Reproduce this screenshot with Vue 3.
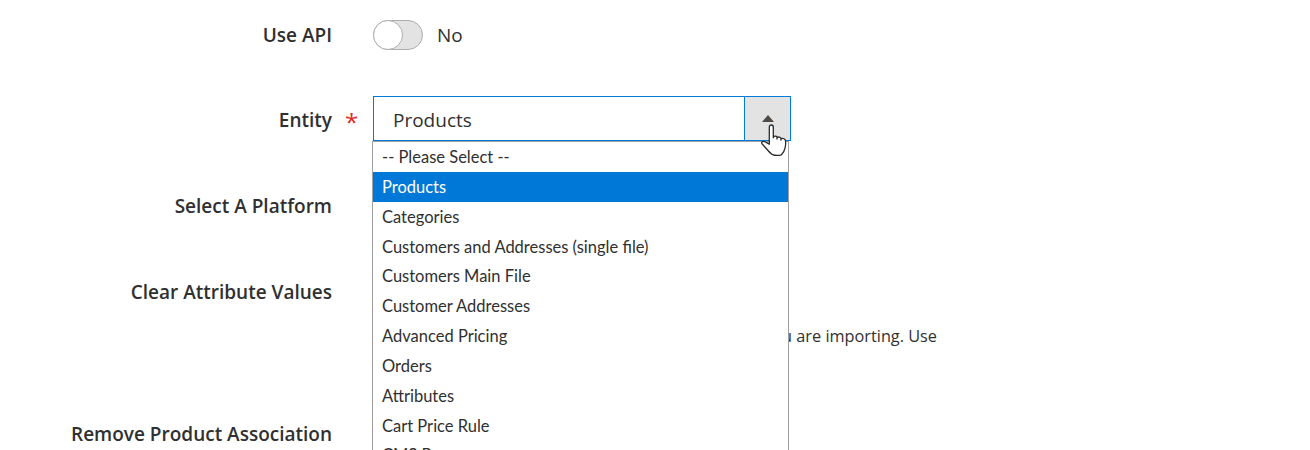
<script setup>
const options = [
  '-- Please Select --',
  'Products',
  'Categories',
  'Customers and Addresses (single file)',
  'Customers Main File',
  'Customer Addresses',
  'Advanced Pricing',
  'Orders',
  'Attributes',
  'Cart Price Rule',
  'CMS Pages'
]
</script>

<template>
  <div class="page">
    <div class="row row-first">
      <div class="label">Use API</div>
      <div class="control toggle-line">
        <span class="toggle"><span class="knob"></span></span>
        <span class="toggle-text">No</span>
      </div>
    </div>

    <div class="row">
      <div class="label required">Entity</div>
      <div class="control">
        <div class="select">
          <span class="select-value">Products</span>
          <span class="select-btn"><span class="arrow"></span></span>
          <ul class="dropdown">
            <li
              v-for="(option, index) in options"
              :key="index"
              :class="{ active: option === 'Products' }"
            >{{ option }}</li>
          </ul>
          <svg class="cursor" viewBox="0 0 30 36" width="30" height="36">
            <path
              d="M9.3 18.6V3.2C9.3 1.6 10.2 1 11.3 1s2 .7 2 2.200v10.600l.3-1.200c.9-.7 2.900-.7 3.400.4v2l.3-1.600c1-.7 3-.5 3.600.7v2l.3-1.300c1.100-.6 3.100-.3 3.900.9.6 1.100.6 5 .1 7.600-.5 2.600-1.900 5.700-3.800 7.500-2.900.9-6.600.7-9.500-.5C9.400 28.300 6.300 24.500 3.700 21.700 2.300 20.200 1 19.200 1.800 18.100c.9-1 3-.5 4.300.2 1.300.6 2.200 1.300 3.200 1.900Z"
              fill="#fff"
              stroke="#2b2b2b"
              stroke-width="1.300"
              stroke-linejoin="round"
            />
          </svg>
        </div>
      </div>
    </div>

    <div class="row">
      <div class="label">Select A Platform</div>
      <div class="control"></div>
    </div>

    <div class="row row-note">
      <div class="label">Clear Attribute Values</div>
      <div class="control">
        <p class="note">Clear all existing values of attributes in the file you are importing. Use</p>
      </div>
    </div>

    <div class="row">
      <div class="label">Remove Product Association</div>
      <div class="control"></div>
    </div>
  </div>
</template>

<style scoped>
.page {
  height: 450px;
  overflow: hidden;
  background: #fff;
  padding-top: 11px;
  box-sizing: border-box;
  font-family: "Open Sans", sans-serif;
  color: #303030;
}

.row {
  display: grid;
  grid-template-columns: 332px 418px;
  column-gap: 41px;
  height: 45px;
  margin-bottom: 41px;
}

.row-first {
  height: 44px;
}

.row-note {
  height: 97px;
  margin-bottom: 45px;
}

.label {
  position: relative;
  text-align: right;
  font-size: 19px;
  font-weight: 600;
  line-height: 24px;
  padding-top: 12px;
}

.required::after {
  content: '*';
  position: absolute;
  left: 345px;
  top: 14px;
  font-size: 24px;
  font-weight: 400;
  color: #e02b27;
}

.toggle-line {
  display: flex;
  align-items: center;
  gap: 14px;
  height: 48px;
}

.toggle {
  display: block;
  width: 50px;
  height: 30px;
  box-sizing: border-box;
  border: 1px solid #adadad;
  border-radius: 15px;
  background: #e3e3e3;
}

.knob {
  display: block;
  width: 30px;
  height: 30px;
  margin: -1px 0 0 -1px;
  box-sizing: border-box;
  border: 1px solid #adadad;
  border-radius: 50%;
  background: #fff;
}

.toggle-text {
  font-size: 19px;
  line-height: 24px;
}

.control {
  position: relative;
}

.select {
  position: relative;
  display: flex;
  height: 45px;
  box-sizing: border-box;
  border: 1px solid #007bdb;
  background: #fff;
}

.select-value {
  flex: 1;
  padding: 11px 0 0 19px;
  font-size: 19px;
  line-height: 24px;
}

.select-btn {
  display: flex;
  justify-content: center;
  width: 46px;
  padding-top: 18px;
  box-sizing: border-box;
  border-left: 1px solid #007bdb;
  background: #e3e3e3;
}

.arrow {
  width: 0;
  height: 0;
  border-left: 6px solid transparent;
  border-right: 6px solid transparent;
  border-bottom: 7px solid #514943;
}

.dropdown {
  position: absolute;
  z-index: 2;
  top: 44px;
  left: -2px;
  width: 417px;
  height: 400px;
  margin: 0;
  padding: 0;
  box-sizing: border-box;
  list-style: none;
  background: #fff;
  border: 1px solid #a0a0a0;
  border-bottom: 0;
  font-family: "Lato", sans-serif;
  font-size: 16.5px;
  color: #303030;
}

.dropdown li {
  height: 29.85px;
  line-height: 31.85px;
  padding-left: 9px;
  box-sizing: border-box;
}

.dropdown li.active {
  background: #0078d7;
  color: #fff;
}

.cursor {
  position: absolute;
  z-index: 3;
  left: 386px;
  top: 27px;
}

.note {
  position: absolute;
  top: 55px;
  right: -146px;
  margin: 0;
  white-space: nowrap;
  font-size: 16.3px;
  line-height: 26px;
}
</style>

<style>
html, body {
  margin: 0;
  overflow: hidden;
}
</style>
